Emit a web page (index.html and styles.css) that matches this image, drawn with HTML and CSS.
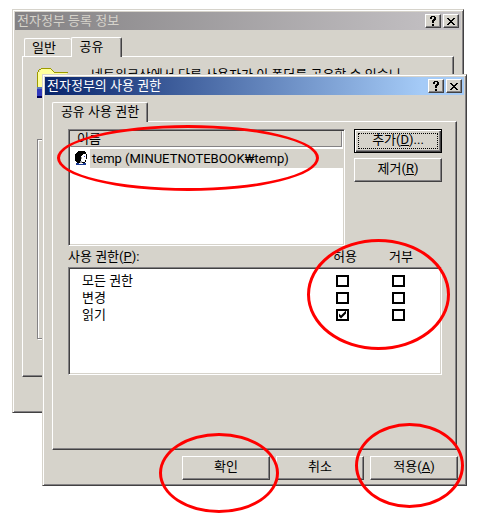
FILE: index.html
```html
<!DOCTYPE html>
<html lang="ko">
<head>
  <meta charset="UTF-8">
  <meta name="viewport" content="width=device-width, initial-scale=1.0">
  <title>전자정부의 사용 권한</title>
  <link rel="stylesheet" href="styles.css">
</head>
<body>
  <div class="desktop">
    <!-- Folder properties window -->
    <section class="window window-back">
      <header class="title-bar inactive">
        <h2>전자정부 등록 정보</h2>
        <button type="button" class="title-button" aria-label="도움말">
          <svg width="8" height="10" viewBox="0 0 8 10" shape-rendering="crispEdges"><path d="M2 0h4v1h1v3h-1v1h-1v2h-2v-3h1v-1h1v-2h-2v2h-2v-2h1zM3 8h2v2h-2z"/></svg>
        </button>
        <button type="button" class="title-button" aria-label="닫기">
          <svg width="8" height="7" viewBox="0 0 8 7" shape-rendering="crispEdges"><path d="M0 0h2v1h1v1h2v-1h1v-1h2v1h-1v1h-1v1h-1v1h1v1h1v1h1v1h-2v-1h-1v-1h-2v1h-1v1h-2v-1h1v-1h1v-1h1v-1h-1v-1h-1v-1h-1z"/></svg>
        </button>
      </header>
      <div class="tabs tabs-back">
        <button type="button" class="tab tab-general">일반</button>
        <button type="button" class="tab tab-share active">공유</button>
      </div>
      <div class="panel panel-back">
        <div class="share-info">
          <svg class="folder" width="32" height="32" viewBox="0 0 32 32" shape-rendering="crispEdges">
            <path fill="#ffff9c" d="M1 4h2v-2h1v-1h10l3 4h13v14h-29z"/>
            <path fill="#9c9a00" d="M0 4h1v15h-1zM1 2h1v2h-1zM2 1h2v1h-2zM4 0h10v1h-10zM14 1h1v1h-1zM15 2h1v1h-1zM16 3h1v1h-1zM17 4h14v1h-14z"/>
            <path fill="#5a79bd" d="M0 19h6v2h-6z"/>
            <path fill="#3139bd" d="M0 21h6v7h-6z"/>
            <path fill="#00005a" d="M0 28h6v2h-6z"/>
          </svg>
          <p>네트워크상에서 다른 사용자가 이 폴더를 공유할 수 있습니</p>
        </div>
        <div class="group-box"></div>
      </div>
    </section>

    <!-- Share permissions window -->
    <section class="window window-front">
      <header class="title-bar">
        <h2>전자정부의 사용 권한</h2>
        <button type="button" class="title-button" aria-label="도움말">
          <svg width="8" height="10" viewBox="0 0 8 10" shape-rendering="crispEdges"><path d="M2 0h4v1h1v3h-1v1h-1v2h-2v-3h1v-1h1v-2h-2v2h-2v-2h1zM3 8h2v2h-2z"/></svg>
        </button>
        <button type="button" class="title-button" aria-label="닫기">
          <svg width="8" height="7" viewBox="0 0 8 7" shape-rendering="crispEdges"><path d="M0 0h2v1h1v1h2v-1h1v-1h2v1h-1v1h-1v1h-1v1h1v1h1v1h1v1h-2v-1h-1v-1h-2v1h-1v1h-2v-1h1v-1h1v-1h1v-1h-1v-1h-1v-1h-1z"/></svg>
        </button>
      </header>
      <div class="tabs">
        <button type="button" class="tab tab-permission active">공유 사용 권한</button>
      </div>
      <div class="panel panel-front">
        <div class="users">
          <div class="list-box user-list">
            <div class="list-header">이름</div>
            <div class="user-row">
              <svg width="12" height="15" viewBox="0 0 12 15" shape-rendering="crispEdges">
                <path fill="#000" d="M3 0h7v1h1v2h-2v1h-1v1h-1v4h1v2h1v1h-7v-1h-1v-1h-1v-7h1v-1h1v-1h1z"/>
                <path fill="#fff" d="M8 3h3v6h-1v2h-3v-1h-1v-5h1v-1h1z"/>
                <path fill="#000" d="M11 3h1v5h-1zM10 9h1v2h-1zM7 11h3v1h-3z"/>
                <path fill="#9c9a9c" d="M6 6h1v2h-1zM5 10h2v2h-2z"/>
                <path fill="#3139bd" d="M9 5h1v1h-1z"/>
                <path fill="#183994" d="M1 12h3v1h4v-1h3v2h-10z"/>
              </svg>
              <span>temp (MINUETNOTEBOOK₩temp)</span>
            </div>
            <span class="mark mark-user"></span>
          </div>
          <div class="user-buttons">
            <button type="button" class="button default">추가(<u>D</u>)...</button>
            <button type="button" class="button">제거(<u>R</u>)</button>
          </div>
        </div>

        <div class="permission-head">
          <span>사용 권한(<u>P</u>):</span>
          <span class="column">허용</span>
          <span class="column">거부</span>
        </div>
        <div class="list-box permission-list">
          <div class="permission-row">
            <span>모든 권한</span>
            <input type="checkbox" aria-label="모든 권한 허용">
            <input type="checkbox" aria-label="모든 권한 거부">
          </div>
          <div class="permission-row">
            <span>변경</span>
            <input type="checkbox" aria-label="변경 허용">
            <input type="checkbox" aria-label="변경 거부">
          </div>
          <div class="permission-row">
            <span>읽기</span>
            <input type="checkbox" aria-label="읽기 허용" checked>
            <input type="checkbox" aria-label="읽기 거부">
          </div>
          <span class="mark mark-check"></span>
        </div>
      </div>
      <footer class="actions">
        <div class="action">
          <button type="button" class="button">확인</button>
          <span class="mark mark-ok"></span>
        </div>
        <div class="action">
          <button type="button" class="button">취소</button>
        </div>
        <div class="action">
          <button type="button" class="button">적용(<u>A</u>)</button>
          <span class="mark mark-apply"></span>
        </div>
      </footer>
    </section>
  </div>
</body>
</html>
```
FILE: styles.css
```css
* {
  box-sizing: border-box;
}

body {
  margin: 0;
  background: #fff;
  color: #000;
  font-family: Roboto, "Noto Sans CJK KR", sans-serif;
  font-size: 13px;
  line-height: 16px;
}

h2,
p {
  margin: 0;
  font-size: 13px;
  font-weight: normal;
}

button {
  margin: 0;
  padding: 0;
  color: #000;
  font: inherit;
}

.desktop {
  position: relative;
  min-height: 100vh;
  overflow: hidden;
}

/* Windows */
.window {
  position: absolute;
  padding: 2px;
  background: #d6d3cb;
  border: 1px solid;
  border-color: #d6d3cb #424142 #424142 #d6d3cb;
  box-shadow: inset 1px 1px #fff, inset -1px -1px #848284;
}

.window-back {
  top: 9px;
  left: 12px;
  right: 19px;
  padding-bottom: 35px;
}

.window-front {
  top: 74px;
  left: 42px;
  right: 16px;
}

.title-bar {
  display: flex;
  align-items: center;
  gap: 2px;
  height: 18px;
  padding: 0 2px;
  background: linear-gradient(90deg, #08246b, #a5cbf7 90%);
  color: #fff;
}

.title-bar.inactive {
  background: linear-gradient(90deg, #848284, #c6c3c6);
  color: #d6d3cb;
}

.title-bar h2 {
  flex: 1;
}

.title-button {
  display: flex;
  align-items: center;
  justify-content: center;
  width: 16px;
  height: 14px;
  background: #d6d3cb;
  border: 1px solid;
  border-color: #fff #424142 #424142 #fff;
  box-shadow: inset -1px -1px #848284;
}

/* Tabs */
.tabs {
  display: flex;
  align-items: flex-end;
  padding: 7px 7px 0;
}

.tabs-back {
  padding-left: 9px;
}

.tab {
  height: 18px;
  background: #d6d3cb;
  border: 1px solid #fff;
  border-right: 0;
  border-bottom: 0;
  border-radius: 2px 2px 0 0;
}

.tab.active {
  position: relative;
  z-index: 1;
  height: 20px;
  margin-bottom: -1px;
  padding-bottom: 1px;
  border-right: 1px solid #424142;
  box-shadow: inset -1px 0 #848284;
}

.tab-general {
  width: 47px;
  padding-right: 8px;
}

.tab-share {
  width: 51px;
  padding-right: 10px;
}

.tab-permission {
  width: 96px;
}

.panel {
  margin: 0 7px;
  border: 1px solid;
  border-color: #fff #424142 #424142 #fff;
  box-shadow: inset -1px -1px #848284;
}

.panel-back {
  padding: 11px 14px 37px;
}

.panel-front {
  padding: 7px 14px 74px 15px;
}

.share-info {
  display: flex;
  gap: 22px;
  height: 71px;
  line-height: 14px;
  white-space: nowrap;
}

.group-box {
  height: 200px;
  border: 1px solid #848284;
  box-shadow: inset 1px 1px #fff, 1px 1px #fff;
}

/* Lists */
.list-box {
  position: relative;
  background: #fff;
  border: 1px solid;
  border-color: #848284 #fff #fff #848284;
  box-shadow: inset 1px 1px #424142, inset -1px -1px #d6d3cb;
}

.users {
  display: flex;
  gap: 9px;
}

.user-list {
  flex: 1;
  height: 117px;
  padding: 1px;
}

.list-header {
  height: 16px;
  margin-right: 1px;
  padding-left: 6px;
  background: #d6d3cb;
  border: 1px solid;
  border-color: #d6d3cb #848284 #848284 #d6d3cb;
  line-height: 14px;
}

.user-row {
  display: flex;
  align-items: center;
  gap: 3px;
  height: 19px;
  margin-top: 2px;
  padding-left: 5px;
}

.user-row span {
  flex: 1;
  padding-left: 2px;
  background: #d6d3cb;
  line-height: 19px;
  white-space: nowrap;
}

.user-buttons {
  display: flex;
  flex-direction: column;
  gap: 5px;
}

.button {
  width: 88px;
  height: 24px;
  padding-bottom: 2px;
  background: #d6d3cb;
  border: 1px solid;
  border-color: #fff #424142 #424142 #fff;
  box-shadow: inset -1px -1px #848284;
}

.button.default {
  border-color: #000;
  box-shadow: inset 1px 1px #fff, inset -1px -1px #424142, inset -2px -2px #848284;
  outline: 1px dotted #000;
  outline-offset: -5px;
}

.permission-head {
  display: flex;
  align-items: center;
  height: 21px;
  padding-right: 13px;
}

.permission-head span:first-child,
.permission-row span {
  flex: 1;
}

.permission-head .column {
  width: 56px;
  text-align: center;
}

.permission-list {
  height: 108px;
  padding: 4px 15px 0 13px;
}

.permission-row {
  display: flex;
  align-items: center;
  height: 17px;
}

.permission-row input {
  appearance: none;
  width: 13px;
  height: 12px;
  margin: 0 21px 0 22px;
  background: #fff;
  border: 2px solid #000;
}

.permission-row input:checked::before {
  content: "";
  display: block;
  width: 9px;
  height: 8px;
  background: #000;
  clip-path: polygon(1px 3px, 3px 5px, 8px 0, 8px 3px, 3px 8px, 1px 6px);
}

.actions {
  display: flex;
  justify-content: flex-end;
  gap: 6px;
  padding: 6px 6px 3px;
}

.action {
  position: relative;
  display: flex;
}

/* Red circles drawn over the controls */
.mark {
  position: absolute;
  z-index: 2;
  border: 3px solid #f00;
  border-radius: 50%;
  pointer-events: none;
}

.mark-user {
  top: -5px;
  left: -12px;
  right: 25px;
  height: 66px;
}

.mark-check {
  top: -29px;
  right: -9px;
  width: 143px;
  height: 111px;
}

.mark-ok {
  top: -23px;
  left: -23px;
  width: 120px;
  height: 80px;
}

.mark-apply {
  top: -33px;
  left: -15px;
  width: 109px;
  height: 85px;
}
```
